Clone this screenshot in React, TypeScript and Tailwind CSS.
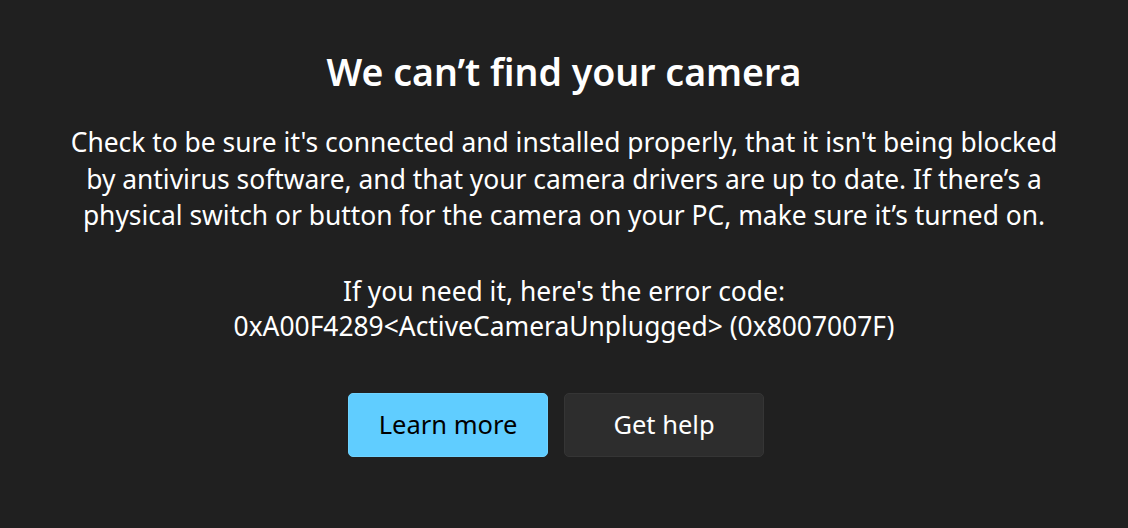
export default function App() {
  return (
    <div className="w-[1128px] h-[528px] bg-[#202020] text-white flex flex-col items-center overflow-hidden" style={{ fontFamily: '"Noto Sans", "Open Sans", sans-serif' }}>
      <h1 className="mt-[46px] text-[37.5px] leading-[52px] font-semibold">We can’t find your camera</h1>
      <p className="mt-[26px] text-[26.4px] leading-[36.5px] text-center">
        Check to be sure it's connected and installed properly, that it isn't being blocked<br />
        by antivirus software, and that your camera drivers are up to date. If there’s a<br />
        physical switch or button for the camera on your PC, make sure it’s turned on.
      </p>
      <p className="mt-[40px] text-[26.4px] leading-[35px] text-center">
        If you need it, here's the error code:<br />
        0xA00F4289&lt;ActiveCameraUnplugged&gt; (0x8007007F)
      </p>
      <div className="mt-[49px] mr-[16px] flex gap-4">
        <button className="w-[200px] h-[64px] rounded-[5px] bg-[#60cdff] text-black text-[25.5px] border border-[#6fd3ff]">Learn more</button>
        <button className="w-[200px] h-[64px] rounded-[5px] bg-[#2d2d2d] text-white text-[25.5px] border border-[#353535]">Get help</button>
      </div>
    </div>
  );
}
